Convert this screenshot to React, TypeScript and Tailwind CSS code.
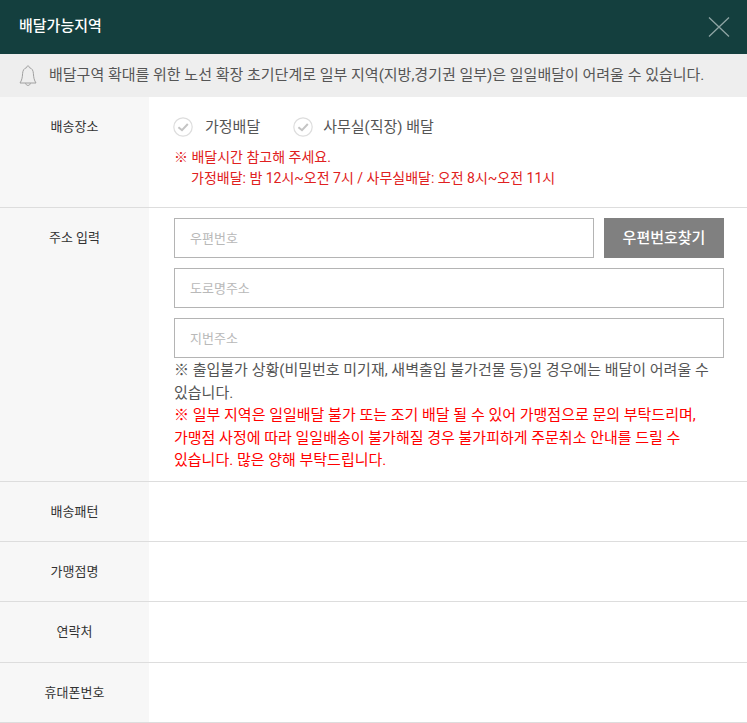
const FONT = "font-['Roboto','Noto_Sans_CJK_KR',sans-serif]";

function Check() {
  return (
    <svg width="20" height="20" viewBox="0 0 20 20" fill="none" className="shrink-0">
      <circle cx="10" cy="10" r="9.2" stroke="#dddddd" strokeWidth="1.2" fill="#ffffff" />
      <path d="M5.4 10.2 L9 13.2 L14.8 7" stroke="#c4c4c4" strokeWidth="2" fill="none" />
    </svg>
  );
}

function Label({ children, className = "" }: { children: React.ReactNode; className?: string }) {
  return (
    <div className={`w-[149px] shrink-0 bg-[#f7f7f7] text-center text-[13px] leading-5 text-[#333333] ${className}`}>
      {children}
    </div>
  );
}

function EmptyRow({ label, h }: { label: string; h: string }) {
  return (
    <div className={`flex border-b border-[#dddddd] ${h}`}>
      <Label className="flex items-center justify-center">{label}</Label>
      <div className="flex-1" />
    </div>
  );
}

function Field({ placeholder, className = "" }: { placeholder: string; className?: string }) {
  return (
    <div className={`flex h-10 items-center border border-[#b4b4b4] bg-white pl-[15px] pt-px text-[13px] text-[#b9b9b9] ${className}`}>
      {placeholder}
    </div>
  );
}

export default function App() {
  return (
    <div className={`h-[723px] w-[747px] overflow-hidden bg-white ${FONT}`}>
      <header className="flex h-[54px] items-center justify-between bg-[#143f3e] pl-[19px] pr-[17px]">
        <h1 className="-mt-0.5 text-[15px] font-medium text-white">배달가능지역</h1>
        <svg width="22" height="22" viewBox="0 0 22 22" fill="none">
          <path d="M1 1.5 L21 20.5 M21 1.5 L1 20.5" stroke="#8fa5a4" strokeWidth="1.3" />
        </svg>
      </header>

      <div className="flex h-[43px] items-center gap-[12px] bg-[#eeeeee] pl-[19px] text-[15px] text-[#555555]">
        <svg width="18" height="22" viewBox="0 0 18 22" fill="none" stroke="#a0a0a0" strokeWidth="1">
          <path d="M9 1 C9.9 1 10.4 1.6 10.4 2.6 C13.2 3.4 14.2 5.6 14.4 8.6 C14.6 12.4 15.2 15.4 17 18 L1 18 C2.8 15.4 3.4 12.4 3.6 8.6 C3.8 5.6 4.8 3.4 7.6 2.6 C7.6 1.6 8.1 1 9 1 Z" />
          <path d="M6.6 18.2 C6.8 19.6 7.8 20.4 9 20.4 C10.2 20.4 11.2 19.6 11.4 18.2" />
        </svg>
        <p>배달구역 확대를 위한 노선 확장 초기단계로 일부 지역(지방,경기권 일부)은 일일배달이 어려울 수 있습니다.</p>
      </div>

      <div className="flex h-[111px] border-b border-[#dddddd]">
        <Label className="pt-5">배송장소</Label>
        <div className="flex-1 pl-[24px] pt-5">
          <div className="flex h-5 items-center text-[15px] text-[#555555]">
            <Check />
            <span className="ml-[12px] mr-[33px]">가정배달</span>
            <Check />
            <span className="ml-[10px]">사무실(직장) 배달</span>
          </div>
          <p className="mt-[10px] pl-px text-sm leading-[21px] text-[#e02020]">
            ※ 배달시간 참고해 주세요.
            <br />
            <span className="pl-[17px]">가정배달: 밤 12시~오전 7시 / 사무실배달: 오전 8시~오전 11시</span>
          </p>
        </div>
      </div>

      <div className="flex h-[274px] border-b border-[#dddddd]">
        <Label className="pt-5">주소 입력</Label>
        <div className="flex-1 pl-[25px] pr-[23px] pt-[10px]">
          <div className="flex gap-[10px]">
            <Field placeholder="우편번호" className="flex-1" />
            <div className="flex h-10 w-[120px] items-center justify-center bg-[#808080] text-[15px] font-medium text-white">
              우편번호찾기
            </div>
          </div>
          <Field placeholder="도로명주소" className="mt-[10px]" />
          <Field placeholder="지번주소" className="mt-[10px]" />
          <p className="mt-px text-[15px] leading-[22.5px] text-[#555555] [word-break:keep-all]">
            ※ 출입불가 상황(비밀번호 미기재, 새벽출입 불가건물 등)일 경우에는 배달이 어려울 수 있습니다.
          </p>
          <p className="text-[15px] leading-[22.5px] text-[#ff0000] [word-break:keep-all]">
            ※ 일부 지역은 일일배달 불가 또는 조기 배달 될 수 있어 가맹점으로 문의 부탁드리며, 가맹점 사정에 따라 일일배송이 불가해질 경우 불가피하게 주문취소 안내를 드릴 수 있습니다. 많은 양해 부탁드립니다.
          </p>
        </div>
      </div>

      <EmptyRow label="배송패턴" h="h-[60px]" />
      <EmptyRow label="가맹점명" h="h-[60px]" />
      <EmptyRow label="연락처" h="h-[61px]" />
      <EmptyRow label="휴대폰번호" h="h-[60px]" />
    </div>
  );
}
